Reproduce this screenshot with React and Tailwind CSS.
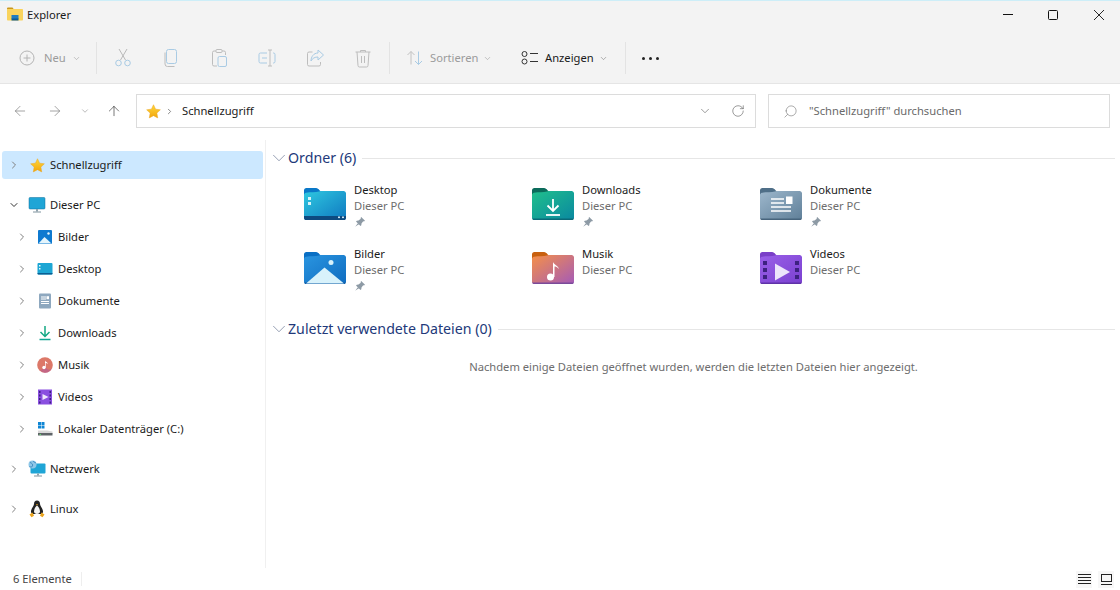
import React from 'react';
import { ChevronRight, ChevronDown, ArrowLeft, ArrowRight, ArrowUp, RotateCw, Search } from 'lucide-react';

const FONT = "font-['Noto_Sans','Open_Sans',sans-serif]";

function Star({ size = 16 }) {
  return (
    <svg width={size} height={size} viewBox="0 0 16 16">
      <defs>
        <linearGradient id="star" x1="0" y1="0" x2="0" y2="1">
          <stop offset="0" stopColor="#ffd83a" />
          <stop offset="1" stopColor="#f2a60d" />
        </linearGradient>
      </defs>
      <path d="M8 .8l2.2 4.7 5.1.7-3.7 3.5.9 5.1L8 12.4l-4.5 2.4.9-5.1L.7 6.2l5.1-.7z" fill="url(#star)" stroke="#e9a21b" strokeWidth=".5" />
    </svg>
  );
}

// big folder shape, the art goes on top of the front panel
function Folder({ id, back, from, to, bottom, children }) {
  return (
    <svg width="44" height="36" viewBox="0 0 44 36" className="shrink-0">
      <defs>
        <linearGradient id={id} x1="0" y1="0" x2="1" y2="1">
          <stop offset="0" stopColor={from} />
          <stop offset="1" stopColor={to} />
        </linearGradient>
      </defs>
      <path d="M1 5.500a2.500 2.500 0 0 1 2.500-2.500h9.500c1.500 0 2.500 1 3.500 2.200 1 1.100 2 1.800 3.500 1.800h21v6H1z" fill={back} />
      <path d="M1 11c0-1 .8-2 2-2.300 5-1 9.500-.1 13-1.200 1-.4 2.500-.5 4-.5h20.500c1.400 0 2.500 1 2.500 2.500v24c0 1.400-1.100 2.500-2.500 2.500h-37C2.100 36 1 34.900 1 33.500z" fill={`url(#${id})`} transform="translate(0 -1)" />
      <path d="M1 33.500c0 .9 1.100 1.500 2.500 1.500h37c1.400 0 2.500-.6 2.500-1.500z" fill={bottom} />
      {children}
    </svg>
  );
}

const folders = {
  Desktop: (
    <Folder id="fd" back="#0a78c8" from="#2fc8e0" to="#0f78c0" bottom="#0d4a80">
      <path d="M1 31h42v1.500c0 1.400-1.100 2.500-2.500 2.500h-37C2.100 35 1 33.900 1 32.500z" fill="#0d4a80" />
      <rect x="5" y="12" width="3" height="3" fill="#d8f4fa" />
      <rect x="5" y="17" width="3" height="3" fill="#d8f4fa" />
      <rect x="35" y="31.500" width="2" height="1.600" fill="#cfe8f5" />
      <rect x="39" y="31.500" width="2" height="1.600" fill="#cfe8f5" />
    </Folder>
  ),
  Downloads: (
    <Folder id="fdl" back="#0b6b5b" from="#20c08c" to="#0a88a0" bottom="#0a6a78">
      <path d="M22 14v12M16.500 20.500l5.500 5.500 5.500-5.500" fill="none" stroke="#fff" strokeWidth="1.800" />
      <path d="M15 30h14" stroke="#fff" strokeWidth="1.800" />
    </Folder>
  ),
  Dokumente: (
    <Folder id="fdo" back="#4f6f88" from="#9db7cc" to="#5f7f98" bottom="#47647c">
      <path d="M12 14h13M12 18h13M12 22h20M12 26h20" stroke="#fff" strokeWidth="1.500" />
      <rect x="27" y="11.500" width="6.500" height="7.500" fill="#fff" />
    </Folder>
  ),
  Bilder: (
    <Folder id="fb" back="#0a6fc4" from="#2a95e0" to="#0f6cc0" bottom="#0d5ba5">
      <circle cx="28" cy="13.500" r="2.500" fill="#d8f2fb" />
      <path d="M3 34.500L21.500 18.500 41 34.500z" fill="#d8f2fb" />
    </Folder>
  ),
  Musik: (
    <Folder id="fm" back="#c8600f" from="#f59048" to="#a45ab8" bottom="#7a4a9a">
      <circle cx="19.500" cy="28" r="3.500" fill="#fff" />
      <path d="M22 28V13c1 3 5 3.500 6 7-2-2-3-2.500-4.500-2.500V28z" fill="#fff" />
    </Folder>
  ),
  Videos: (
    <Folder id="fv" back="#7a3fc8" from="#9a60e8" to="#7a40d0" bottom="#5f32a8">
      <path d="M16 14.500l15 8.500-15 8.500z" fill="#ece4fb" />
      <path d="M4 12h4v4H4zM4 19h4v4H4zM4 26h4v4H4zM36 12h4v4h-4zM36 19h4v4h-4zM36 26h4v4h-4z" fill="#3d2180" />
    </Folder>
  ),
};

function Pin() {
  return (
    <svg width="12" height="12" viewBox="0 0 12 12">
      <path d="M7.200 1l3.800 3.800-1 .6-.8-.2L7.500 7.500 7.300 9.200 6.500 10 2 5.500l.8-.8 1.700-.2 2.300-1.700-.2-.8zM3.800 7.200L1.200 10.800l3.600-2.600z" fill="#8d9aa5" />
    </svg>
  );
}

const sideIcons = {
  pc: (
    <svg width="18" height="18" viewBox="0 0 18 18">
      <rect x="1" y="1.500" width="16" height="11.500" rx="1" fill="#1fa5d6" stroke="#0c6e9c" strokeWidth=".5" />
      <path d="M8 13h2v2.500H8z" fill="#8fa3ae" />
      <path d="M5 16h8" stroke="#7f939e" strokeWidth="1" />
    </svg>
  ),
  bilder: (
    <svg width="16" height="16" viewBox="0 0 16 16">
      <rect x="1" y="1" width="14" height="14" rx="1" fill="#0e7ad0" />
      <circle cx="11.500" cy="4.500" r="1.200" fill="#e4f5fc" />
      <path d="M1.500 14.500l6-6.500 7 6.500z" fill="#e4f5fc" />
    </svg>
  ),
  desktop: (
    <svg width="16" height="16" viewBox="0 0 16 16">
      <rect x="0.500" y="2" width="15" height="11.500" rx="1" fill="#1da6d4" />
      <path d="M.5 12h15v.5a1 1 0 0 1-1 1h-13a1 1 0 0 1-1-1z" fill="#0b5e92" />
      <rect x="2" y="4" width="1.500" height="1.500" fill="#e6f8fc" />
      <rect x="2" y="7" width="1.500" height="1.500" fill="#e6f8fc" />
    </svg>
  ),
  dokumente: (
    <svg width="16" height="16" viewBox="0 0 16 16">
      <rect x="2" y="0.500" width="12" height="15" rx="1" fill="#8ea8bf" />
      <path d="M4 4h5M4 6h5M4 8.500h8M4 10.500h8" stroke="#fff" strokeWidth="1" />
      <rect x="9.500" y="3.200" width="2.500" height="3" fill="#fff" />
    </svg>
  ),
  downloads: (
    <svg width="16" height="16" viewBox="0 0 16 16">
      <path d="M8 1v10M3.500 7l4.500 4.500L12.500 7" fill="none" stroke="#14a884" strokeWidth="1.500" />
      <path d="M2.500 14.500h11" stroke="#12a592" strokeWidth="1.500" />
    </svg>
  ),
  musik: (
    <svg width="16" height="16" viewBox="0 0 16 16">
      <circle cx="8" cy="8" r="7.800" fill="#dc7868" />
      <path d="M8 8c1 5 5 6 7 3a8 8 0 0 1-7 5 8 8 0 0 1-5-3c2 0 4-2 5-5z" fill="#b45a98" opacity=".6" />
      <circle cx="7" cy="10.500" r="1.700" fill="#fff" />
      <path d="M8 10.500V3.500c.5 1.500 2.500 1.500 3 3.500-1-.9-1.800-1-2.300-1v4.500z" fill="#fff" />
    </svg>
  ),
  videos: (
    <svg width="16" height="16" viewBox="0 0 16 16">
      <rect x="1" y="0.500" width="14" height="15" fill="#8a4fe0" />
      <path d="M5.500 5l6 3-6 3z" fill="#f0e8fc" />
      <path d="M2 2h1.500v2H2zM2 5.500h1.500v2H2zM2 9h1.500v2H2zM2 12.500h1.500v2H2zM12.500 2H14v2h-1.500zM12.500 5.500H14v2h-1.500zM12.500 9H14v2h-1.500zM12.500 12.500H14v2h-1.500z" fill="#3d2180" />
    </svg>
  ),
  disk: (
    <svg width="16" height="16" viewBox="0 0 16 16">
      <path d="M1 1h3v3H1zM4.500 1h3v3h-3zM1 4.500h3v3H1z" fill="#0f86d4" />
      <path d="M4.500 4.500h3v3h-3z" fill="#0f86d4" />
      <path d="M1 9.500h9l5.500 1v2.500H1z" fill="#d9d9d9" />
      <path d="M1 12h14.500v2.500H1z" fill="#5f6468" />
      <rect x="2.500" y="13" width="1.500" height="1" fill="#5fe06a" />
    </svg>
  ),
  netz: (
    <svg width="18" height="18" viewBox="0 0 18 18">
      <rect x="2.500" y="3.500" width="15" height="10" rx="1" fill="#1fa5d6" />
      <path d="M9 13.500h2v2H9z" fill="#8fa3ae" />
      <path d="M6 16h8" stroke="#7f939e" strokeWidth="1" />
      <circle cx="4.500" cy="4.500" r="4" fill="#8ec7e8" />
      <path d="M2 2.500c2 .5 3 2 2.500 3.500S2.500 7 1.500 6.500M5 1c.5 1 2 1.500 3 2" stroke="#2f7fb8" strokeWidth=".8" fill="none" />
    </svg>
  ),
  linux: (
    <svg width="18" height="18" viewBox="0 0 18 18">
      <path d="M9 .5c2 0 3 1.500 3 3.500 0 2 2.500 4 3 7 .2 1.500-.5 2.500-1.500 3h-9C3.500 13.500 2.800 12.500 3 11c.5-3 3-5 3-7C6 2 7 .5 9 .5z" fill="#222" />
      <path d="M9 5.500c-1.300 1-3 3.500-3 6 0 1.500 1.300 2.500 3 2.500s3-1 3-2.500c0-2.500-1.700-5-3-6z" fill="#f4f4f4" />
      <path d="M7.800 4.300h2.400L9 5.600z" fill="#e9a31c" />
      <path d="M1.500 14.500l3-2 1.500 3.200-2.500 1.500zM16.500 14.500l-3-2-1.500 3.200 2.500 1.500z" fill="#e9a31c" />
    </svg>
  ),
};

function Tb({ children }) {
  return (
    <button className="w-[48px] h-[32px] flex items-center justify-center">
      <svg width="22" height="22" viewBox="0 0 22 22" fill="none" strokeWidth="1">{children}</svg>
    </button>
  );
}

function Sep() {
  return <div className="w-px h-[32px] bg-[#e3e3e3] shrink-0" />;
}

function SmallChevron({ className }) {
  return <ChevronDown size={9} strokeWidth={1.500} className={className} />;
}

function NavRow({ icon, label, indent, open, selected }) {
  return (
    <div className={`h-8 flex items-center ${selected ? 'pl-[2px] pr-[2px]' : ''}`}>
      <div className={`flex-1 h-7 flex items-center rounded-[3px] ${selected ? 'bg-[#cce8ff]' : ''}`}>
        <div className={`flex items-center ${indent ? 'w-[58px] pl-[16px]' : selected ? 'w-[48px] pl-[6px]' : 'w-[50px] pl-[8px]'}`}>
          <span className="w-[12px] flex justify-center">
            {open
              ? <ChevronDown size={14} strokeWidth={2} className="text-[#333]" />
              : <ChevronRight size={14} strokeWidth={2} className="text-[#808080]" />}
          </span>
          <span className="ml-[7px] w-[20px] flex justify-center">{icon}</span>
        </div>
        <span className="text-[#1a1a1a] text-[11.2px] whitespace-nowrap">{label}</span>
      </div>
    </div>
  );
}

function Section({ title, lineGap, className, children }) {
  return (
    <section className={className}>
      <div className="flex items-center h-[20px]">
        <ChevronDown size={22} strokeWidth={0.700} className="text-[#5c6b8a] -ml-[4px] -mr-[2px]" />
        <span className="text-[#22397a] text-[14.2px] whitespace-nowrap">{title}</span>
        <div className={`flex-1 h-px bg-[#e6e6e6] ${lineGap}`} />
      </div>
      {children}
    </section>
  );
}

function FolderTile({ name, pinned }) {
  return (
    <div className="h-[64px] w-[228px] flex">
      <div className="pt-[4px] mr-[7px]">{folders[name]}</div>
      <div className="pt-[1px] text-[11.2px] leading-[16px]">
        <div className="text-[#1a1a1a]">{name}</div>
        <div className="text-[#6d6d6d]">Dieser PC</div>
        {pinned && <div className="h-[16px] flex items-center"><Pin /></div>}
      </div>
    </div>
  );
}

export default function App() {
  return (
    <div className={`${FONT} w-[1120px] h-[590px] bg-white flex flex-col overflow-hidden`}>
      <div className="h-px bg-[#cdeef8]" />
      {/* title bar */}
      <div className="h-[41px] bg-[#f3f3f3] flex justify-between">
        <div className="flex items-start pt-[5px] pl-[7px]">
          <svg width="16" height="16" viewBox="0 0 16 16">
            <path d="M0 2.500a1 1 0 0 1 1-1h4.500L7 3.500H0z" fill="#c9971c" />
            <rect x="0" y="3" width="16" height="11.500" rx=".8" fill="#f9d35c" />
            <rect x="4.500" y="9" width="7" height="4" fill="#1f7cc0" />
            <rect x="4.500" y="12.500" width="7" height="2" fill="#0b5a94" />
          </svg>
          <span className="ml-[4px] text-[11.2px] leading-[18px] text-[#1a1a1a]">Explorer</span>
        </div>
        <div className="flex items-start pt-[9px] pr-[16px] gap-[35px]">
          <svg width="10" height="10" viewBox="0 0 10 10"><path d="M0 4.500h10" stroke="#111" /></svg>
          <svg width="10" height="10" viewBox="0 0 10 10"><rect x=".5" y=".5" width="9" height="9" rx="1" fill="none" stroke="#111" /></svg>
          <svg width="10" height="10" viewBox="0 0 10 10" className="ml-px"><path d="M0 0l10 10M10 0L0 10" stroke="#111" strokeWidth=".9" /></svg>
        </div>
      </div>
      {/* command bar */}
      <div className="h-[42px] bg-[#f3f3f3] border-b border-[#e5e5e5] flex items-start pl-[19px] text-[11.2px]">
        <div className="flex items-center h-[32px] w-[77px] text-[#9b9b9b]">
          <svg width="16" height="16" viewBox="0 0 16 16" fill="none">
            <circle cx="8" cy="8" r="7" stroke="#b4b4b4" />
            <path d="M8 4.500v7M4.500 8h7" stroke="#b4b4b4" />
          </svg>
          <span className="ml-[9px]">Neu</span>
          <SmallChevron className="ml-[6px]" />
        </div>
        <Sep />
        <div className="ml-[2px] flex">
          <Tb>
            <path d="M7 2l6.500 11M15 2L8.500 13" stroke="#b9b9b9" />
            <circle cx="6.500" cy="16" r="2.800" stroke="#a9cbe4" />
            <circle cx="15.500" cy="16" r="2.800" stroke="#a9cbe4" />
          </Tb>
          <Tb>
            <rect x="6.500" y="2.500" width="10" height="14" rx="2" stroke="#a9cbe4" />
            <path d="M5 5.500v11.500a2.500 2.500 0 0 0 2.500 2.500h7" stroke="#bdbdbd" />
          </Tb>
          <Tb>
            <path d="M8 4H6a1.500 1.500 0 0 0-1.500 1.500v12A1.500 1.500 0 0 0 6 19h3M14 4h2a1.500 1.500 0 0 1 1.500 1.500V8" stroke="#bdbdbd" />
            <rect x="8" y="2.500" width="6" height="3" rx="1" stroke="#bdbdbd" />
            <rect x="10" y="9.500" width="8.500" height="10" rx="1.500" stroke="#a9cbe4" />
          </Tb>
          <Tb>
            <path d="M11 6H4.500A1.500 1.500 0 0 0 3 7.500v7A1.500 1.500 0 0 0 4.500 16H11M17 6h.5A1.500 1.500 0 0 1 19 7.500v7a1.500 1.500 0 0 1-1.500 1.500H17" stroke="#a9cbe4" />
            <path d="M6 11h5" stroke="#a9cbe4" />
            <path d="M12 3h4M12 19h4M14 3v16" stroke="#bdbdbd" />
          </Tb>
          <Tb>
            <path d="M8.500 5H5a1.500 1.500 0 0 0-1.500 1.500v11A1.500 1.500 0 0 0 5 19h10a1.500 1.500 0 0 0 1.500-1.500V15" stroke="#bdbdbd" />
            <path d="M14 3l5.500 5-5.500 5V10c-3 0-5.500 1-7 4 0-4 2.500-8 7-8z" stroke="#a9cbe4" />
          </Tb>
          <Tb>
            <path d="M3.500 5h15M8.500 5V3.500h5V5M5 5l1 13.500A1.500 1.500 0 0 0 7.500 20h7a1.500 1.500 0 0 0 1.500-1.500L17 5" stroke="#bdbdbd" />
            <path d="M9.500 9v7M12.500 9v7" stroke="#bdbdbd" />
          </Tb>
        </div>
        <div className="ml-[2px]"><Sep /></div>
        <div className="flex items-center h-[32px] w-[131px] pl-[16px] text-[#9b9b9b]">
          <svg width="18" height="18" viewBox="0 0 18 18" fill="none">
            <path d="M5 15.500V2.500M1.500 6L5 2.500 8.500 6" stroke="#c2c2c2" />
            <path d="M12.500 2.500v13M9 12l3.500 3.500L16 12" stroke="#a9cbe4" />
          </svg>
          <span className="ml-[6px]">Sortieren</span>
          <SmallChevron className="ml-[5px]" />
        </div>
        <div className="flex items-center h-[32px] w-[104px] text-[#1a1a1a]">
          <svg width="18" height="16" viewBox="0 0 18 16" fill="none" stroke="#333">
            <circle cx="3.500" cy="4" r="2.500" />
            <circle cx="3.500" cy="11.500" r="2.500" />
            <path d="M9 3.500h8M9 11.500h8" />
          </svg>
          <span className="ml-[6px]">Anzeigen</span>
          <SmallChevron className="ml-[5px] text-[#777]" />
        </div>
        <Sep />
        <div className="h-[32px] flex items-center gap-[4px] ml-[16px]">
          <span className="w-[3px] h-[3px] rounded-full bg-[#222]" />
          <span className="w-[3px] h-[3px] rounded-full bg-[#222]" />
          <span className="w-[3px] h-[3px] rounded-full bg-[#222]" />
        </div>
      </div>
      {/* address row */}
      <div className="h-[56px] flex items-start pt-[10px] text-[11.2px]">
        <div className="w-[136px] h-[34px] flex items-center shrink-0">
          <ArrowLeft size={16} strokeWidth={1} className="ml-[12px] text-[#777]" />
          <ArrowRight size={16} strokeWidth={1} className="ml-[19px] text-[#777]" />
          <ChevronDown size={10} strokeWidth={1.200} className="ml-[17px] text-[#777]" />
          <ArrowUp size={16} strokeWidth={1} className="ml-[16px] text-[#333]" />
        </div>
        <div className="w-[620px] h-[34px] border border-[#dcdcdc] flex items-center">
          <span className="ml-[9px]"><Star size={15} /></span>
          <ChevronRight size={9} strokeWidth={1.800} className="ml-[4px] text-[#555]" />
          <span className="ml-[8px] text-[#1a1a1a]">Schnellzugriff</span>
          <ChevronDown size={14} strokeWidth={1} className="ml-auto text-[#555]" />
          <RotateCw size={14} strokeWidth={1} className="ml-[19px] mr-[10px] text-[#555]" />
        </div>
        <div className="ml-[12px] w-[342px] h-[34px] border border-[#dcdcdc] flex items-center">
          <Search size={15} strokeWidth={1} className="ml-[14px] -scale-x-100 text-[#7a7a7a]" />
          <span className="ml-[11px] text-[#6a6a6a]">"Schnellzugriff" durchsuchen</span>
        </div>
      </div>
      {/* body */}
      <div className="flex-1 flex min-h-0">
        <aside className="w-[266px] shrink-0 border-r border-[#f0f0f0] pt-[9px]">
          <NavRow selected icon={<Star size={15} />} label="Schnellzugriff" />
          <div className="h-2" />
          <NavRow open icon={sideIcons.pc} label="Dieser PC" />
          <NavRow indent icon={sideIcons.bilder} label="Bilder" />
          <NavRow indent icon={sideIcons.desktop} label="Desktop" />
          <NavRow indent icon={sideIcons.dokumente} label="Dokumente" />
          <NavRow indent icon={sideIcons.downloads} label="Downloads" />
          <NavRow indent icon={sideIcons.musik} label="Musik" />
          <NavRow indent icon={sideIcons.videos} label="Videos" />
          <NavRow indent icon={sideIcons.disk} label="Lokaler Datenträger (C:)" />
          <div className="h-2" />
          <NavRow icon={sideIcons.netz} label="Netzwerk" />
          <div className="h-2" />
          <NavRow icon={sideIcons.linux} label="Linux" />
        </aside>
        <main className="flex-1 pl-[6px] pr-[5px] pt-[8px]">
          <Section title="Ordner (6)" lineGap="ml-[6px]">
            <div className="grid grid-cols-[228px_228px_228px] pl-[31px] pt-[13px]">
              <FolderTile name="Desktop" pinned />
              <FolderTile name="Downloads" pinned />
              <FolderTile name="Dokumente" pinned />
              <FolderTile name="Bilder" pinned />
              <FolderTile name="Musik" />
              <FolderTile name="Videos" />
            </div>
          </Section>
          <Section title="Zuletzt verwendete Dateien (0)" lineGap="ml-[6px]" className="mt-[10px]">
            <p className="text-center text-[11.2px] text-[#6d6d6d] mt-[20px]">
              Nachdem einige Dateien geöffnet wurden, werden die letzten Dateien hier angezeigt.
            </p>
          </Section>
        </main>
      </div>
      {/* status bar */}
      <div className="h-[22px] flex items-center text-[11.2px] text-[#444] shrink-0">
        <span className="ml-[13px] mt-px">6 Elemente</span>
        <div className="ml-[9px] w-px h-[14px] bg-[#eeeeee]" />
        <div className="ml-auto mr-[6px] flex items-center gap-[6px]">
          <div className="w-[16px] h-[17px] bg-[#f7f7f7] flex items-center justify-center">
            <svg width="13" height="11" viewBox="0 0 13 11"><path d="M0 .5h13M0 3.500h13M0 6.500h13M0 9.500h13" stroke="#222" /></svg>
          </div>
          <div className="w-[16px] h-[17px] bg-[#f7f7f7] flex items-center justify-center">
            <svg width="13" height="13" viewBox="0 0 13 13" fill="none" stroke="#222"><rect x="1.500" y="1.500" width="10" height="7" /><path d="M1 11.500h11" /></svg>
          </div>
        </div>
      </div>
    </div>
  );
}
